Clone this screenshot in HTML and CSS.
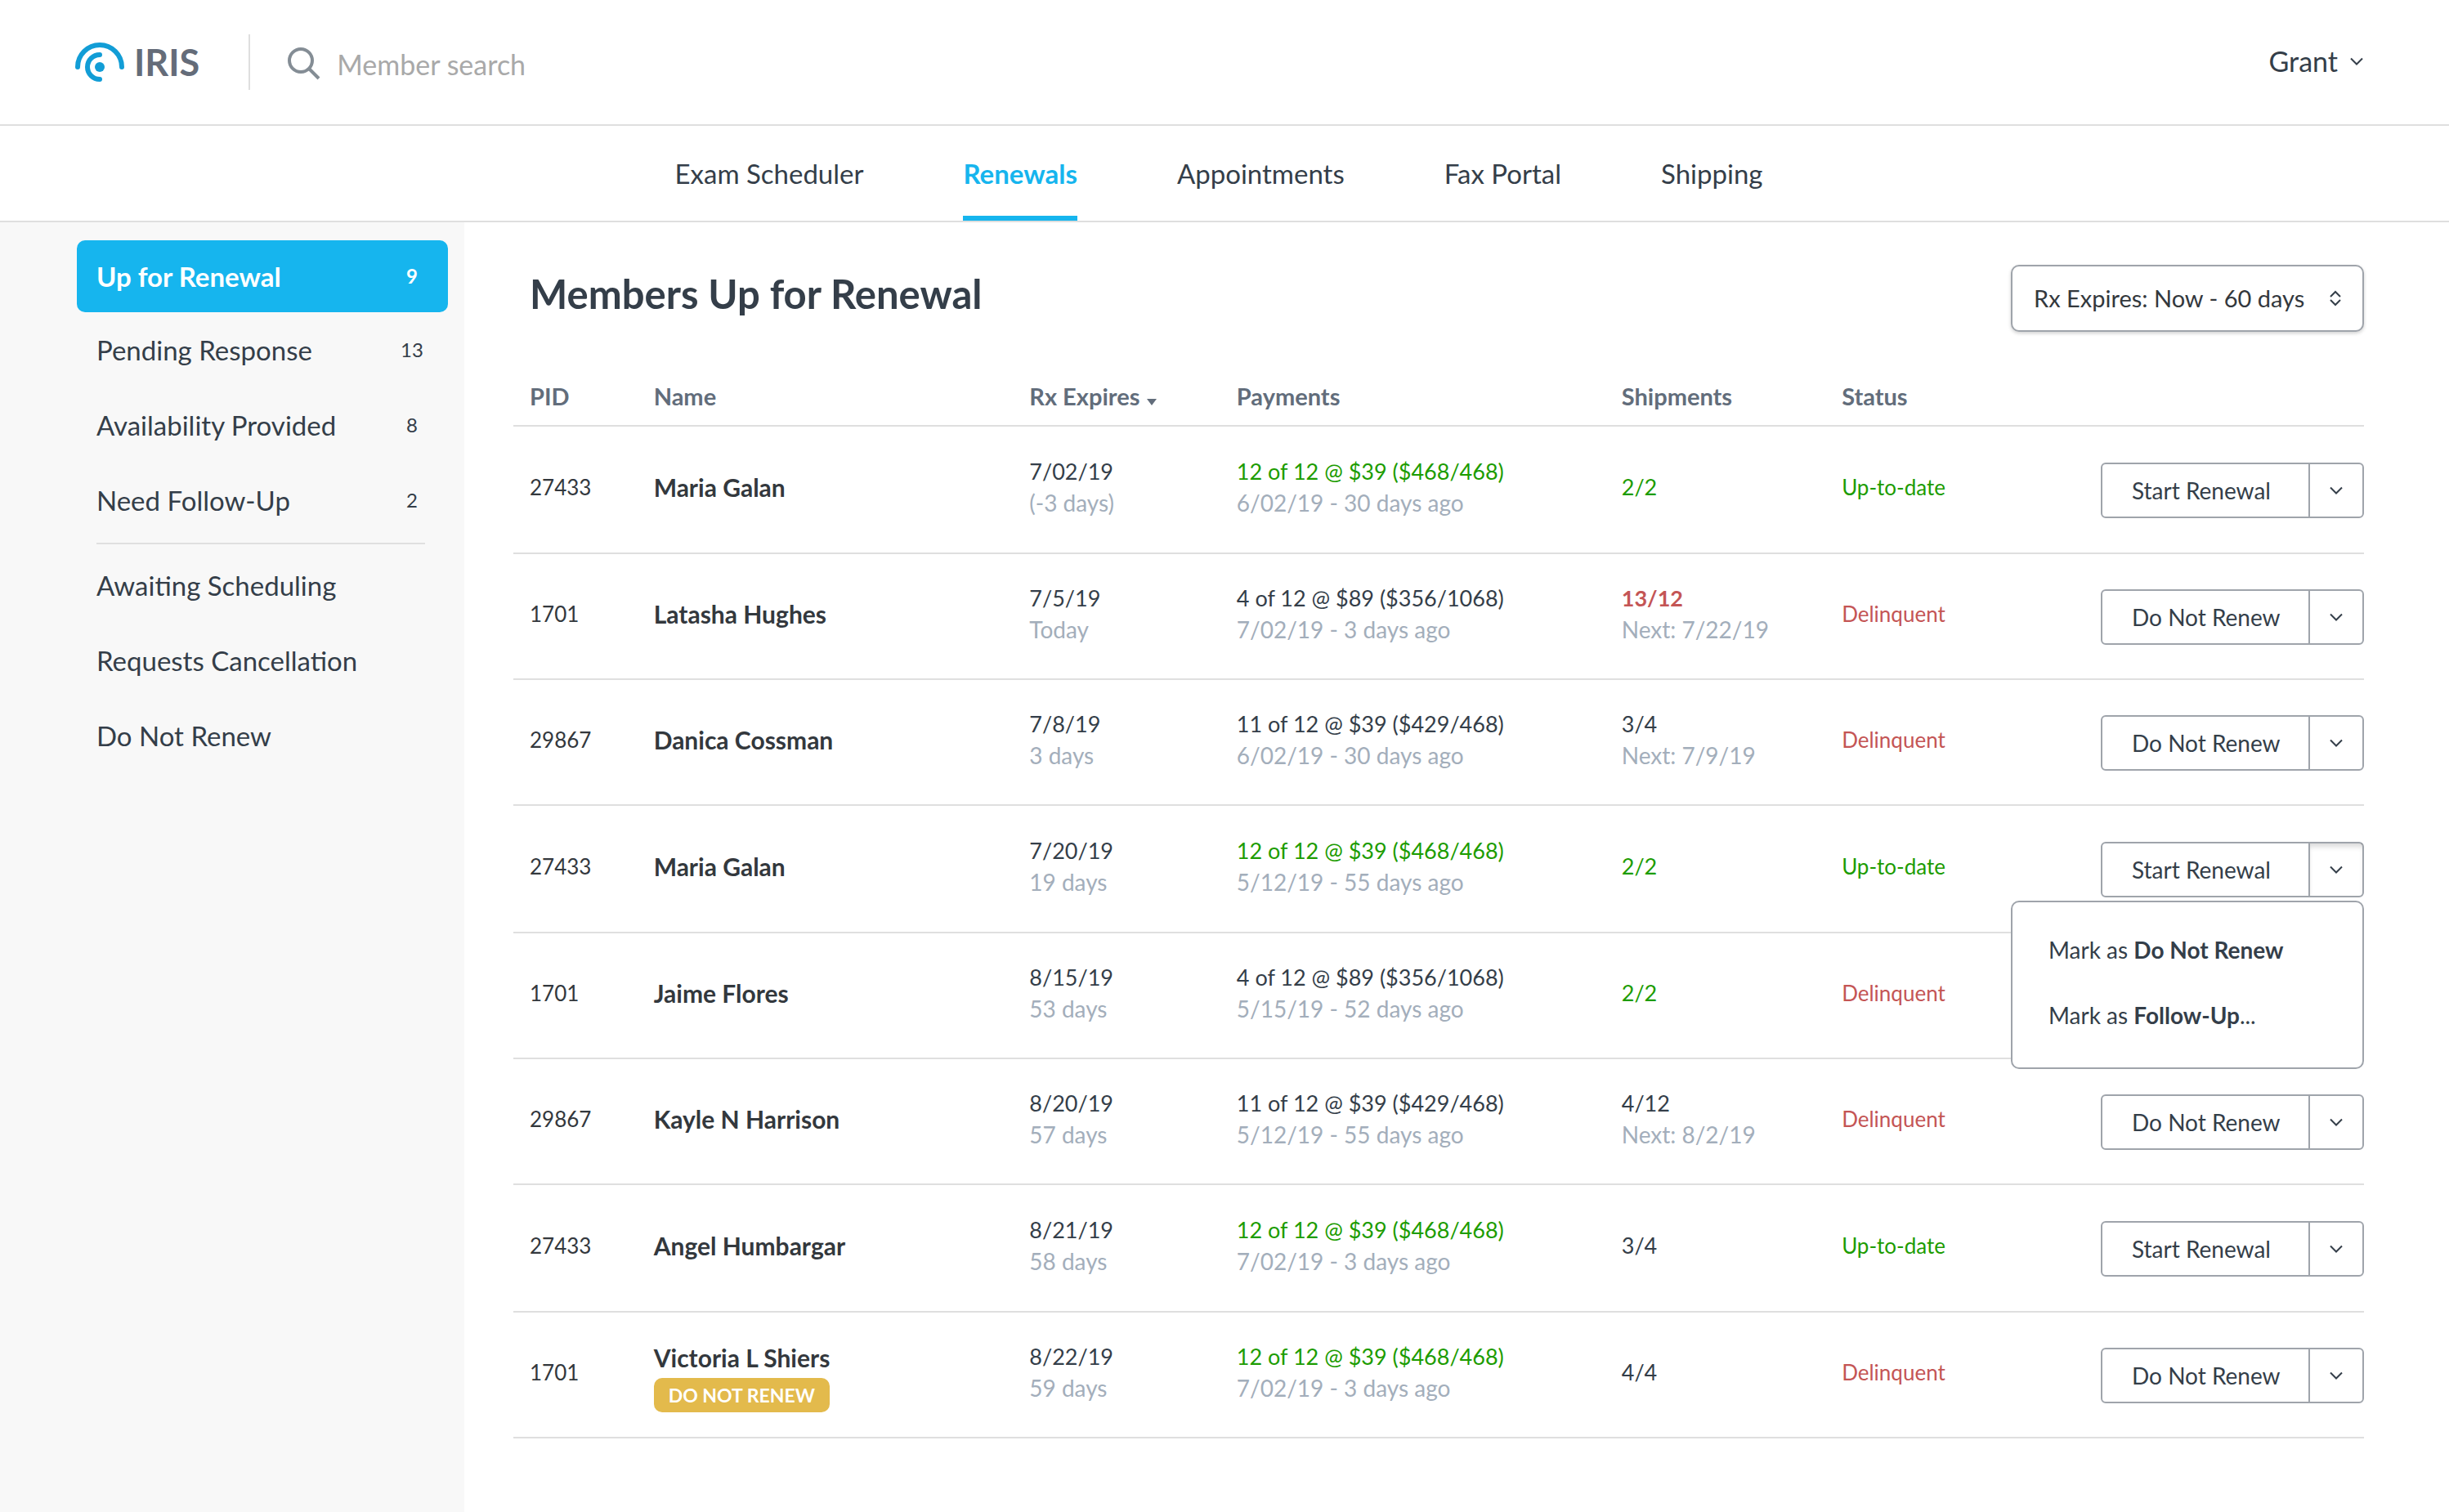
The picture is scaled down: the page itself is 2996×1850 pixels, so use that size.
FILE: index.html
```html
<!DOCTYPE html>
<html lang="en">
<head>
<meta charset="utf-8">
<meta name="viewport" content="width=device-width, initial-scale=1">
<title>Members Up for Renewal - IRIS</title>
<link rel="stylesheet" href="styles.css">
</head>
<body>
<svg class="sprite" aria-hidden="true">
  <symbol id="chevron" viewBox="0 0 18 10"><path d="M2 1.5 9 8.5 16 1.5" fill="none" stroke="currentColor" stroke-width="2"/></symbol>
</svg>

<header class="topbar">
  <a class="brand" href="#">
    <svg class="brand-mark" viewBox="0 0 60 48" aria-hidden="true">
      <g fill="none" stroke="currentColor" stroke-width="6" stroke-linecap="round">
        <path d="M3 30a27 27 0 0 1 54 0"/>
        <path d="M30 15a15 15 0 0 0 0 30"/>
      </g>
      <circle cx="30" cy="30" r="6" fill="currentColor"/>
    </svg>
    <span class="brand-name">IRIS</span>
  </a>
  <form class="search" role="search">
    <svg class="search-icon" viewBox="0 0 40 40" aria-hidden="true">
      <g fill="none" stroke="currentColor" stroke-width="4">
        <circle cx="16" cy="16" r="14"/>
        <path d="M26 26 38 38"/>
      </g>
    </svg>
    <input class="search-input" type="search" placeholder="Member search" aria-label="Member search">
  </form>
  <button class="account" type="button">Grant <svg class="chevron"><use href="#chevron"/></svg></button>
</header>

<nav class="tabs" aria-label="Main">
  <a class="tab" href="#">Exam Scheduler</a>
  <a class="tab tab-active" href="#" aria-current="page">Renewals</a>
  <a class="tab" href="#">Appointments</a>
  <a class="tab" href="#">Fax Portal</a>
  <a class="tab" href="#">Shipping</a>
</nav>

<div class="layout">
  <aside class="sidebar">
    <nav class="side-nav" aria-label="Renewal queues">
      <a class="side-link side-link-active" href="#" aria-current="page">Up for Renewal <span class="count">9</span></a>
      <a class="side-link" href="#">Pending Response <span class="count">13</span></a>
      <a class="side-link" href="#">Availability Provided <span class="count">8</span></a>
      <a class="side-link" href="#">Need Follow-Up <span class="count">2</span></a>
      <hr class="side-divider">
      <a class="side-link" href="#">Awaiting Scheduling</a>
      <a class="side-link" href="#">Requests Cancellation</a>
      <a class="side-link" href="#">Do Not Renew</a>
    </nav>
  </aside>

  <main class="content">
    <div class="toolbar">
      <h1 class="title">Members Up for Renewal</h1>
      <div class="filter">
        <select class="filter-select" aria-label="Rx expiry range">
          <option>Rx Expires: Now - 60 days</option>
        </select>
        <svg class="filter-icon" viewBox="0 0 14 20" aria-hidden="true">
          <path d="M1 8 7 2 13 8M1 12 7 18 13 12" fill="none" stroke="currentColor" stroke-width="2"/>
        </svg>
      </div>
    </div>

    <table class="members">
      <colgroup>
        <col class="col-pid"><col class="col-name"><col class="col-expires"><col class="col-payments"><col class="col-shipments"><col class="col-status"><col>
      </colgroup>
      <thead>
        <tr>
          <th scope="col">PID</th>
          <th scope="col">Name</th>
          <th scope="col" aria-sort="ascending">Rx Expires <svg class="sort" viewBox="0 0 12 8" aria-hidden="true"><path d="M0 0h12L6 8z" fill="currentColor"/></svg></th>
          <th scope="col">Payments</th>
          <th scope="col">Shipments</th>
          <th scope="col">Status</th>
          <td></td>
        </tr>
      </thead>
      <tbody>
        <tr class="row-current">
          <td class="pid">27433</td>
          <td class="name">Maria Galan</td>
          <td>7/02/19<span class="sub">(-3 days)</span></td>
          <td><span class="good">12 of 12 @ $39 ($468/468)</span><span class="sub">6/02/19 - 30 days ago</span></td>
          <td class="good">2/2</td>
          <td class="status good">Up-to-date</td>
          <td class="actions"><div class="split"><button class="split-main" type="button">Start Renewal</button><button class="split-caret" type="button" aria-label="More actions"><svg class="chevron"><use href="#chevron"/></svg></button></div></td>
        </tr>
        <tr>
          <td class="pid">1701</td>
          <td class="name">Latasha Hughes</td>
          <td>7/5/19<span class="sub">Today</span></td>
          <td>4 of 12 @ $89 ($356/1068)<span class="sub">7/02/19 - 3 days ago</span></td>
          <td><strong class="bad">13/12</strong><span class="sub">Next: 7/22/19</span></td>
          <td class="status bad">Delinquent</td>
          <td class="actions"><div class="split"><button class="split-main" type="button">Do Not Renew</button><button class="split-caret" type="button" aria-label="More actions"><svg class="chevron"><use href="#chevron"/></svg></button></div></td>
        </tr>
        <tr>
          <td class="pid">29867</td>
          <td class="name">Danica Cossman</td>
          <td>7/8/19<span class="sub">3 days</span></td>
          <td>11 of 12 @ $39 ($429/468)<span class="sub">6/02/19 - 30 days ago</span></td>
          <td>3/4<span class="sub">Next: 7/9/19</span></td>
          <td class="status bad">Delinquent</td>
          <td class="actions"><div class="split"><button class="split-main" type="button">Do Not Renew</button><button class="split-caret" type="button" aria-label="More actions"><svg class="chevron"><use href="#chevron"/></svg></button></div></td>
        </tr>
        <tr class="row-current">
          <td class="pid">27433</td>
          <td class="name">Maria Galan</td>
          <td>7/20/19<span class="sub">19 days</span></td>
          <td><span class="good">12 of 12 @ $39 ($468/468)</span><span class="sub">5/12/19 - 55 days ago</span></td>
          <td class="good">2/2</td>
          <td class="status good">Up-to-date</td>
          <td class="actions">
            <div class="split">
              <button class="split-main" type="button">Start Renewal</button><button class="split-caret split-caret-open" type="button" aria-label="More actions" aria-expanded="true"><svg class="chevron"><use href="#chevron"/></svg></button>
              <div class="menu">
                <button class="menu-item" type="button">Mark as <strong>Do Not Renew</strong></button>
                <button class="menu-item" type="button">Mark as <strong>Follow-Up</strong>...</button>
              </div>
            </div>
          </td>
        </tr>
        <tr>
          <td class="pid">1701</td>
          <td class="name">Jaime Flores</td>
          <td>8/15/19<span class="sub">53 days</span></td>
          <td>4 of 12 @ $89 ($356/1068)<span class="sub">5/15/19 - 52 days ago</span></td>
          <td class="good">2/2</td>
          <td class="status bad">Delinquent</td>
          <td class="actions"></td>
        </tr>
        <tr>
          <td class="pid">29867</td>
          <td class="name">Kayle N Harrison</td>
          <td>8/20/19<span class="sub">57 days</span></td>
          <td>11 of 12 @ $39 ($429/468)<span class="sub">5/12/19 - 55 days ago</span></td>
          <td>4/12<span class="sub">Next: 8/2/19</span></td>
          <td class="status bad">Delinquent</td>
          <td class="actions"><div class="split"><button class="split-main" type="button">Do Not Renew</button><button class="split-caret" type="button" aria-label="More actions"><svg class="chevron"><use href="#chevron"/></svg></button></div></td>
        </tr>
        <tr class="row-current">
          <td class="pid">27433</td>
          <td class="name">Angel Humbargar</td>
          <td>8/21/19<span class="sub">58 days</span></td>
          <td><span class="good">12 of 12 @ $39 ($468/468)</span><span class="sub">7/02/19 - 3 days ago</span></td>
          <td>3/4</td>
          <td class="status good">Up-to-date</td>
          <td class="actions"><div class="split"><button class="split-main" type="button">Start Renewal</button><button class="split-caret" type="button" aria-label="More actions"><svg class="chevron"><use href="#chevron"/></svg></button></div></td>
        </tr>
        <tr>
          <td class="pid">1701</td>
          <td class="name name-flagged">Victoria L Shiers<span class="badge">DO NOT RENEW</span></td>
          <td>8/22/19<span class="sub">59 days</span></td>
          <td><span class="good">12 of 12 @ $39 ($468/468)</span><span class="sub">7/02/19 - 3 days ago</span></td>
          <td>4/4</td>
          <td class="status bad">Delinquent</td>
          <td class="actions"><div class="split"><button class="split-main" type="button">Do Not Renew</button><button class="split-caret" type="button" aria-label="More actions"><svg class="chevron"><use href="#chevron"/></svg></button></div></td>
        </tr>
      </tbody>
    </table>
  </main>
</div>
</body>
</html>
```
FILE: styles.css
```css
:root {
  --ink: #343e49;
  --ink-strong: #33383d;
  --heading: #626d7b;
  --muted: #a3aebb;
  --line: #dfdfdf;
  --control: #9fa4ab;
  --accent: #16b5ee;
  --good: #1c9c00;
  --bad: #c45555;
}

* { box-sizing: border-box; }

body {
  display: flex;
  flex-direction: column;
  min-height: 100vh;
  margin: 0;
  background: #fff;
  color: var(--ink);
  font-family: Lato, sans-serif;
  font-size: 27px;
  line-height: 38px;
}

a { color: inherit; text-decoration: none; }

button, input, select {
  margin: 0;
  padding: 0;
  border: 0;
  background: none;
  color: inherit;
  font: inherit;
}

svg { display: block; flex: none; }
.sprite { position: absolute; width: 0; height: 0; }
.chevron { width: 18px; height: 10px; }

/* Top bar */
.topbar {
  display: flex;
  align-items: center;
  height: 154px;
  padding: 0 104px 0 92px;
  border-bottom: 2px solid var(--line);
}

.brand {
  display: flex;
  align-items: center;
  gap: 12px;
  height: 68px;
  padding-right: 60px;
}
.brand-mark { width: 60px; height: 48px; color: #129dd6; }
.brand-name { color: #646c79; font-size: 45px; font-weight: 700; }

.search {
  display: flex;
  flex: 1;
  align-items: center;
  gap: 20px;
  height: 68px;
  padding: 4px 0 0 46px;
  border-left: 2px solid var(--line);
}
.search-icon { width: 40px; height: 40px; color: #848d95; }
.search-input {
  flex: 1;
  height: 48px;
  outline: 0;
  appearance: none;
  font-size: 34px;
}
.search-input::placeholder { color: #a9a9a9; opacity: 1; }

.account {
  display: flex;
  align-items: center;
  gap: 14px;
  padding-bottom: 2px;
  font-size: 34px;
}

/* Main tabs */
.tabs {
  display: flex;
  justify-content: center;
  gap: 122px;
  height: 118px;
  padding-right: 14px;
  border-bottom: 2px solid var(--line);
}
.tab {
  display: flex;
  align-items: center;
  border: solid transparent;
  border-width: 6px 0;
  font-size: 33px;
}
.tab-active {
  border-bottom-color: var(--accent);
  color: var(--accent);
  font-weight: 700;
}

.layout { display: flex; flex: 1; }

/* Sidebar */
.sidebar {
  flex: none;
  width: 568px;
  padding: 22px 20px 22px 94px;
  background: #f8f8f8;
}
.side-nav { display: flex; flex-direction: column; }
.side-link {
  display: flex;
  align-items: center;
  justify-content: space-between;
  height: 88px;
  margin-bottom: 4px;
  padding: 0 24px;
  border-radius: 10px;
  font-size: 33px;
}
.side-link-active {
  margin-bottom: 2px;
  background: var(--accent);
  color: #fff;
  font-weight: 700;
}
.count { width: 40px; font-size: 24px; text-align: center; }
.side-divider {
  width: 402px;
  margin: 4px 0 6px 24px;
  border: 0;
  border-top: 2px solid #e0e0e0;
}

/* Content */
.content { flex: 1; min-width: 0; padding: 52px 104px 52px 60px; }
.toolbar { display: flex; justify-content: space-between; padding-left: 20px; }
.title { margin: 0; font-size: 49px; font-weight: 700; line-height: 70px; }

.filter { display: grid; align-items: center; width: 432px; }
.filter > * { grid-area: 1 / 1; }
.filter-select {
  width: 100%;
  height: 82px;
  padding: 0 26px;
  border: 2px solid var(--control);
  border-radius: 10px;
  appearance: none;
  background: #fff;
  box-shadow: 0 2px 4px rgba(0, 0, 0, 0.18);
  color: var(--ink-strong);
  font-size: 29px;
}
.filter-icon {
  justify-self: end;
  width: 14px;
  height: 20px;
  margin-right: 28px;
  pointer-events: none;
}

/* Members table */
.members {
  width: 100%;
  border-spacing: 0;
  table-layout: fixed;
}
.col-pid { width: 6.7%; }
.col-name { width: 20.3%; }
.col-expires { width: 11.2%; }
.col-payments { width: 20.8%; }
.col-shipments { width: 11.9%; }
.col-status { width: 12.1%; }

.members th,
.members td {
  padding: 0 20px;
  border-bottom: 2px solid var(--line);
  text-align: left;
  white-space: nowrap;
}
.members th {
  height: 116px;
  padding-bottom: 16px;
  color: var(--heading);
  font-size: 29px;
  font-weight: 700;
  vertical-align: bottom;
}
.sort { display: inline-block; width: 12px; height: 8px; margin-left: 2px; }

.members tbody td { height: 154px; padding-bottom: 6px; vertical-align: middle; }
.members .row-current td { height: 156px; }

.sub { display: block; color: var(--muted); font-size: 28px; }
.members .pid { color: var(--ink-strong); font-size: 26px; }
.members .name { color: var(--ink-strong); font-size: 30px; font-weight: 700; }
.members .name-flagged { padding-top: 12px; }
.members .status { font-size: 26px; }
.good { color: var(--good); }
.bad { color: var(--bad); }

.badge {
  display: block;
  width: fit-content;
  margin-top: 6px;
  padding: 0 18px;
  border-radius: 10px;
  background: #e3ba4c;
  color: #fff;
  font-size: 23px;
  line-height: 42px;
}

/* Row actions */
.members tbody .actions { padding: 2px 0 0; }
.split {
  position: relative;
  display: flex;
  width: 322px;
  height: 68px;
  margin-left: auto;
  border: 2px solid var(--control);
  border-radius: 6px;
  font-size: 28px;
}
.split-main { flex: 1; padding-left: 36px; text-align: left; }
.split-caret {
  display: flex;
  align-items: center;
  justify-content: center;
  width: 66px;
  border-left: 2px solid var(--control);
}
.split-caret-open { box-shadow: inset 0 6px 6px -2px rgba(0, 0, 0, 0.15); }

.menu {
  position: absolute;
  z-index: 1;
  top: 70px;
  right: -2px;
  width: 432px;
  padding: 18px 0 24px;
  border: 2px solid var(--control);
  border-radius: 10px;
  background: #fff;
}
.menu-item {
  display: block;
  width: 100%;
  height: 80px;
  padding: 0 44px;
  text-align: left;
}
```
